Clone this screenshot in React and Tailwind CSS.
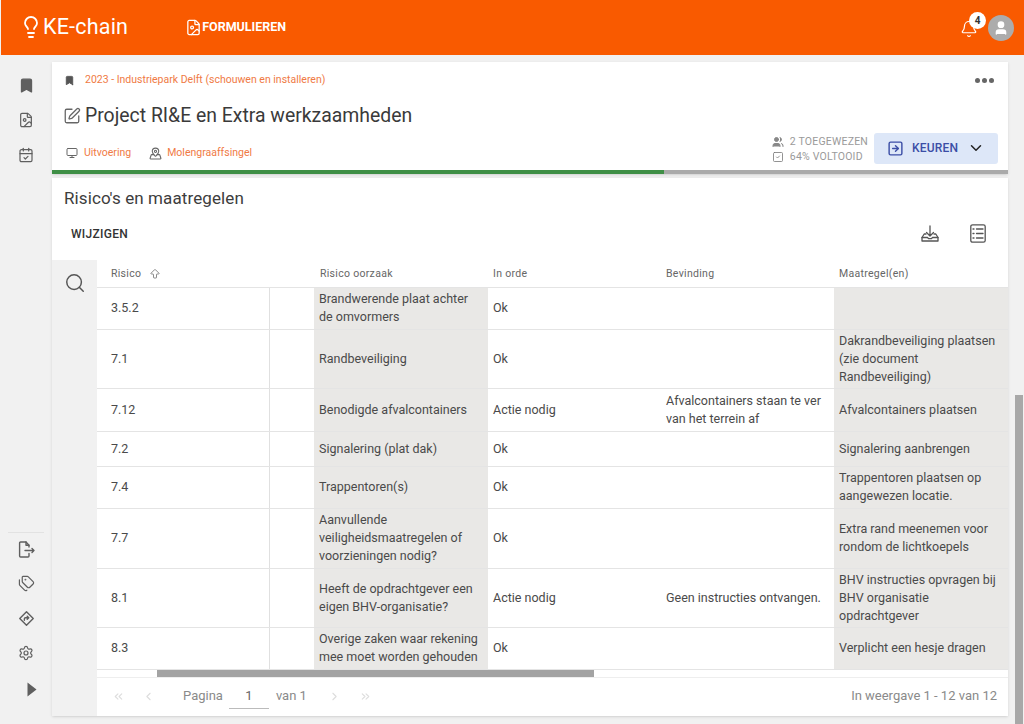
import {
  ArrowBigUp,
  Bell,
  Bookmark,
  CalendarCheck,
  ChevronDown,
  ChevronLeft,
  ChevronRight,
  ChevronsLeft,
  ChevronsRight,
  FileImage,
  Lightbulb,
  MapPinned,
  Monitor,
  Search,
  Settings,
  SquareArrowRight,
  SquareCheck,
  SquarePen,
  Tags,
  User,
  Users,
} from "lucide-react";

const ROWS = [
  { h: "h-[42px]", id: "3.5.2", cause: "Brandwerende plaat achter de omvormers", ok: "Ok", find: "", fix: "" },
  { h: "h-[59px]", id: "7.1", cause: "Randbeveiliging", ok: "Ok", find: "", fix: "Dakrandbeveiliging plaatsen (zie document Randbeveiliging)" },
  { h: "h-[43px]", id: "7.12", cause: "Benodigde afvalcontainers", ok: "Actie nodig", find: "Afvalcontainers staan te ver van het terrein af", fix: "Afvalcontainers plaatsen" },
  { h: "h-[35px]", id: "7.2", cause: "Signalering (plat dak)", ok: "Ok", find: "", fix: "Signalering aanbrengen" },
  { h: "h-[42px]", id: "7.4", cause: "Trappentoren(s)", ok: "Ok", find: "", fix: "Trappentoren plaatsen op aangewezen locatie." },
  { h: "h-[60px]", id: "7.7", cause: "Aanvullende veiligheidsmaatregelen of voorzieningen nodig?", ok: "Ok", find: "", fix: "Extra rand meenemen voor rondom de lichtkoepels" },
  { h: "h-[59px]", id: "8.1", cause: "Heeft de opdrachtgever een eigen BHV-organisatie?", ok: "Actie nodig", find: "Geen instructies ontvangen.", fix: "BHV instructies opvragen bij BHV organisatie opdrachtgever" },
  { h: "h-[42px]", id: "8.3", cause: "Overige zaken waar rekening mee moet worden gehouden", ok: "Ok", find: "", fix: "Verplicht een hesje dragen" },
];

const COLS = "grid grid-cols-[173px_44px_174px_173px_173px_1fr]";

function DiamondShare() {
  return (
    <svg width="17" height="17" viewBox="0 0 24 24" fill="none" stroke="currentColor" strokeWidth="2" strokeLinejoin="round" strokeLinecap="round">
      <path d="M12 2.5 21.5 12 12 21.5 2.5 12Z" />
      <path d="M9 14.5V12.5a1.5 1.5 0 0 1 1.5-1.5H15M13 8.8 15.2 11 13 13.2" />
    </svg>
  );
}

function FileExport() {
  return (
    <svg width="17" height="17" viewBox="0 0 17 17" fill="none" stroke="currentColor" strokeWidth="1.4" strokeLinejoin="round" strokeLinecap="round">
      <path d="M11 6V4.2L8 1H2.6a1 1 0 0 0-1 1v13a1 1 0 0 0 1 1h7.4a1 1 0 0 0 1-1v-2.5" />
      <path d="M8 1v3.2h3" />
      <path d="M7 9.5h9M14 7.5l2 2-2 2" />
    </svg>
  );
}

function TrayDownload() {
  return (
    <svg width="18" height="18" viewBox="0 0 18 18" fill="none" stroke="currentColor" strokeWidth="1.3" strokeLinejoin="round" strokeLinecap="round">
      <path d="M9 1v10M5.5 7.5 9 11l3.5-3.5" />
      <path d="M5 9H3.2L1 12.5V16h16v-3.5L14.8 9H13" />
      <path d="M1 12.5h5.5l1 1.2h3l1-1.2H17" />
    </svg>
  );
}

function ChecklistBox() {
  return (
    <svg width="16" height="19" viewBox="0 0 16 19" fill="none" stroke="currentColor" strokeWidth="1.3" strokeLinecap="round" strokeLinejoin="round">
      <rect x="0.8" y="0.8" width="14.4" height="17.4" rx="1.8" />
      <path d="M3 5h1M6.5 5H13M3 9.5h1M6.5 9.5H13M3 14h1M6.5 14H13" />
    </svg>
  );
}

function Sidebar() {
  return (
    <aside className="w-[52px] shrink-0 flex flex-col items-center text-[#5f5f5f] pt-[22px] pb-[27px]">
      <Bookmark size={17} fill="currentColor" strokeWidth={2} />
      <FileImage size={16} strokeWidth={1.8} className="mt-[18px]" />
      <CalendarCheck size={16} strokeWidth={1.8} className="mt-[19px]" />
      <div className="mt-auto w-9 border-t border-[#e2e2e2] mb-[8px]" />
      <FileExport />
      <Tags size={17} strokeWidth={1.7} className="mt-[17px]" />
      <div className="mt-[18px]"><DiamondShare /></div>
      <Settings size={16} strokeWidth={1.8} className="mt-[18px]" />
      <svg width="10" height="15" viewBox="0 0 10 15" className="mt-[21px] ml-[11px]" fill="currentColor">
        <path d="M0.5 0.5 9.5 7.5 0.5 14.5Z" />
      </svg>
    </aside>
  );
}

function Row({ row }) {
  return (
    <div className={`${COLS} ${row.h} border-b border-[#e4e4e4] text-[#4a4a4a] text-[12.5px] leading-[18px]`}>
      <div className="flex items-center pl-[14px] pb-px border-r border-[#e0e0e0]">{row.id}</div>
      <div />
      <div className="flex items-center bg-[#e9e8e6] pl-[5px] pr-2 pb-px">{row.cause}</div>
      <div className="flex items-center pl-[5px] pb-px">{row.ok}</div>
      <div className="flex items-center pl-[5px] pr-2 pb-px">{row.find}</div>
      <div className="flex items-center bg-[#e9e8e6] pl-[5px] pr-2 pb-px">{row.fix}</div>
    </div>
  );
}

export default function App() {
  return (
    <div className="h-screen overflow-hidden flex flex-col bg-[#f1f1f1] font-['Roboto',sans-serif]">
      <header className="h-[55px] shrink-0 ml-px bg-[#f95a00] text-white flex items-center pl-[18px] pr-[10px]">
        <Lightbulb size={24} strokeWidth={1.8} className="-mt-[2px]" />
        <span className="text-[21.5px] tracking-[0.2px]">KE-chain</span>
        <FileImage size={17} strokeWidth={1.8} className="ml-[57px]" />
        <span className="text-[12.5px] font-bold">FORMULIEREN</span>
        <div className="ml-auto relative flex items-center">
          <Bell size={18} strokeWidth={1.6} className="mr-[10px] mt-[2px]" />
          <span className="absolute left-[9px] -top-[3px] w-[17px] h-[17px] rounded-full bg-white text-[#333] text-[10px] font-bold flex items-center justify-center">4</span>
          <div className="w-[26px] h-[26px] rounded-full bg-[#acacac] flex items-center justify-center">
            <User size={16} fill="white" stroke="white" />
          </div>
        </div>
      </header>

      <div className="flex-1 min-h-0 flex">
        <Sidebar />
        <main className="w-[956px] shrink-0 pt-[7px] flex flex-col">
          <section className="h-[112px] shrink-0 bg-white shadow-sm flex flex-col relative">
            <div className="flex items-center pl-[12px] pr-[14px] pt-[10px] h-[26px]">
              <Bookmark size={11} fill="#555" stroke="#555" />
              <span className="ml-[10px] text-[10.5px] text-[#f07a45]">2023 - Industriepark Delft (schouwen en installeren)</span>
              <span className="ml-auto flex gap-[2px]">
                <i className="w-[5px] h-[5px] rounded-full bg-[#666]" />
                <i className="w-[5px] h-[5px] rounded-full bg-[#666]" />
                <i className="w-[5px] h-[5px] rounded-full bg-[#666]" />
              </span>
            </div>
            <div className="flex items-center pl-[11px] mt-[15px] text-[#3a3a3a]">
              <SquarePen size={18} strokeWidth={1.7} className="text-[#666]" />
              <h1 className="ml-[4px] text-[19.4px] leading-[26px]">Project RI&amp;E en Extra werkzaamheden</h1>
            </div>
            <div className="flex items-end justify-between pl-[14px] pr-[10px] mt-[3px]">
              <div className="flex items-center text-[10.5px] text-[#f07a45] pb-[3px]">
                <Monitor size={12} className="text-[#666]" />
                <span className="ml-[6px]">Uitvoering</span>
                <MapPinned size={13} className="text-[#666] ml-[18px]" />
                <span className="ml-[5px]">Molengraaffsingel</span>
              </div>
              <div className="flex items-center">
                <div className="text-[10.5px] leading-[15px] text-[#9a9a9a] tracking-[0.2px] pt-[2px]">
                  <div className="flex items-center gap-[6px]"><Users size={12} fill="currentColor" className="text-[#888]" />2 TOEGEWEZEN</div>
                  <div className="flex items-center gap-[6px]"><SquareCheck size={12} strokeWidth={1.6} className="text-[#777]" />64% VOLTOOID</div>
                </div>
                <button className="ml-[6px] w-[124px] h-[31px] rounded-[3px] bg-[#dde7f8] text-[#3b4ea6] text-[12px] font-medium flex items-center pl-[13px]">
                  <SquareArrowRight size={17} strokeWidth={2} />
                  <span className="ml-[8px] tracking-[0.2px]">KEUREN</span>
                  <ChevronDown size={18} strokeWidth={2} className="ml-[9px] text-[#222]" />
                </button>
              </div>
            </div>
            <div className="mt-auto h-[4px] bg-[#aaa] flex">
              <div className="h-full bg-[#3f8f46]" style={{ width: "64%" }} />
            </div>
          </section>

          <section className="mt-[4px] h-[538px] shrink-0 bg-white shadow-sm flex flex-col">
            <h2 className="pl-[12px] pt-[9px] pb-px text-[17px] leading-[22px] text-[#3d3d3d] tracking-[0.1px]">Risico's en maatregelen</h2>
            <div className="h-[50px] flex items-center justify-between pl-[19px] pr-[22px] shrink-0 pb-[3px]">
              <span className="text-[12px] font-medium text-[#333] tracking-[0.3px]">WIJZIGEN</span>
              <div className="flex items-center gap-[31px] text-[#555]">
                <TrayDownload />
                <ChecklistBox />
              </div>
            </div>
            <div className="flex-1 min-h-0 flex">
              <div className="w-[45px] shrink-0 bg-[#f1f1f1] pt-[12px] pl-[12px]">
                <Search size={22} strokeWidth={1.6} className="text-[#555]" />
              </div>
              <div className="flex-1 min-w-0 flex flex-col">
                <div className={`${COLS} h-[28px] shrink-0 border-b border-[#e4e4e4] items-center text-[10.5px] text-[#666] tracking-[0.3px]`}>
                  <div className="pl-[14px] flex items-center gap-[8px]">Risico <ArrowBigUp size={12} strokeWidth={1.5} /></div>
                  <div />
                  <div className="pl-[6px]">Risico oorzaak</div>
                  <div className="pl-[5px]">In orde</div>
                  <div className="pl-[5px]">Bevinding</div>
                  <div className="pl-[5px]">Maatregel(en)</div>
                </div>
                {ROWS.map((row) => (
                  <Row key={row.id} row={row} />
                ))}
                <div className="h-[8px] shrink-0 pl-[60px] border-b border-[#eeeeee]">
                  <div className="h-full w-[437px] bg-[#a3a3a3]" />
                </div>
                <div className="flex-1 flex items-center text-[13px] text-[#8a8a8a] pl-[15px] pr-[11px] pb-[2px]">
                  <ChevronsLeft size={13} className="text-[#ddd]" />
                  <ChevronLeft size={13} className="text-[#ddd] ml-[17px]" />
                  <span className="ml-[28px]">Pagina</span>
                  <span className="ml-[6px] w-[40px] h-[25px] border-b border-[#bbb] flex items-center justify-center text-[#666]">1</span>
                  <span className="ml-[7px]">van 1</span>
                  <ChevronRight size={13} className="text-[#ddd] ml-[21px]" />
                  <ChevronsRight size={13} className="text-[#ddd] ml-[18px]" />
                  <span className="ml-auto">In weergave 1 - 12 van 12</span>
                </div>
              </div>
            </div>
          </section>
        </main>
        <div className="flex-1 flex flex-col items-center pl-[6px] pr-[1px]">
          <div className="mt-auto w-[8px] h-[329px] bg-[#a8a8a8]" />
        </div>
      </div>
    </div>
  );
}
